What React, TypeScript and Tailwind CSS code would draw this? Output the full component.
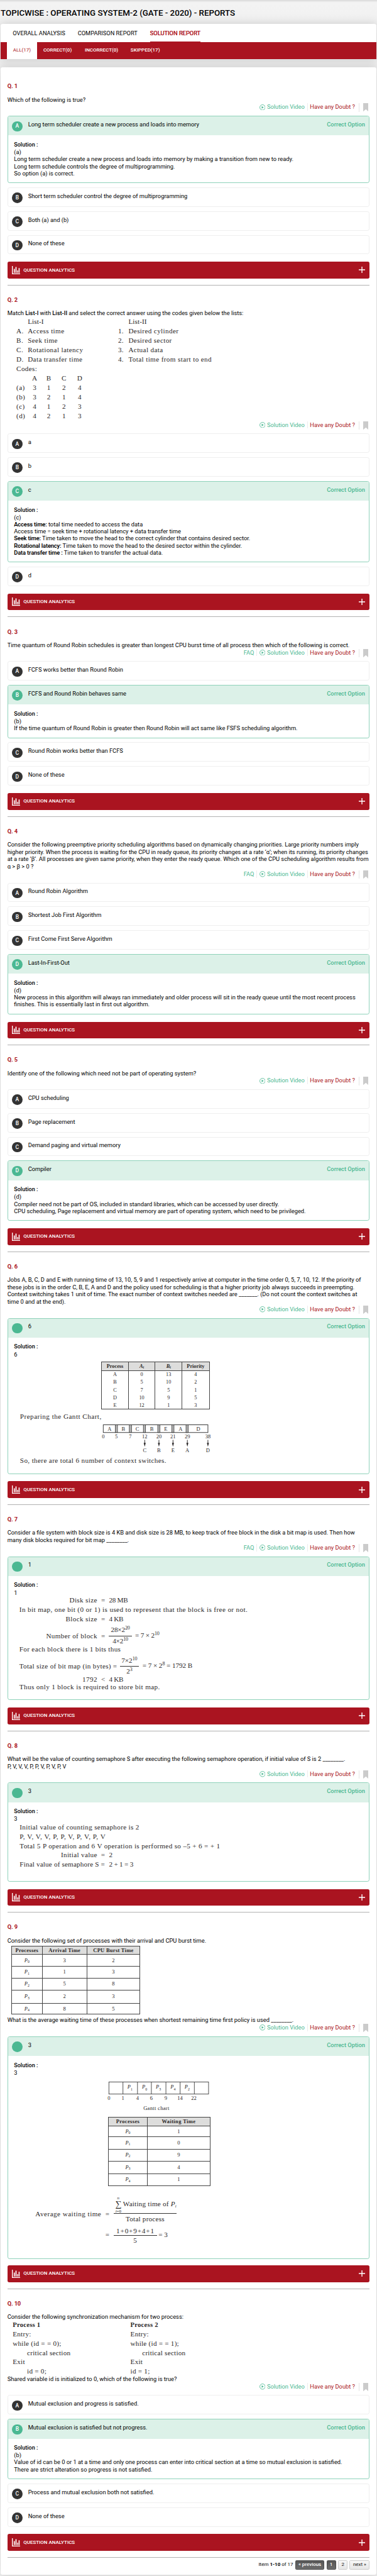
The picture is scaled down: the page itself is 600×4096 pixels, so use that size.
import type { ReactNode } from "react";

const sans = "font-[Roboto,'Liberation_Sans',sans-serif]";
const serif = "font-['Liberation_Serif',serif] text-[#2b2829]";

function ChartIcon() {
  return (
    <svg viewBox="0 0 25 25" className="h-[25px] w-[25px] fill-white">
      <path d="M0 0h2.6v22H25v3H0z" />
      <path d="M5.6 8.5h3V20h-3zM10.6 3h3.2v17h-3.2zM15.8 13h2.6v7h-2.6zM20 6h3v14h-3z" />
    </svg>
  );
}

function PlusIcon() {
  return (
    <svg viewBox="0 0 19 19" className="h-[19px] w-[19px] stroke-white stroke-[2.6]">
      <path d="M9.5 0v19M0 9.5h19" />
    </svg>
  );
}

function Actions({ faq }: { faq?: boolean }) {
  return (
    <div className="mb-[15px] flex h-[22px] items-center justify-end whitespace-nowrap pr-[4px] text-[17.5px] leading-[22px] text-[#4bb892]">
      {faq && <span className="mr-[7px]">FAQ</span>}
      {faq && <span className="mr-[7px] h-[22px] w-[1.5px] bg-[#ececec]" />}
      <svg viewBox="0 0 18 18" className="mr-[5px] mt-[1px] h-[18px] w-[18px]">
        <circle cx="9" cy="9" r="8" fill="none" stroke="#4bb892" strokeWidth="1.6" />
        <path d="M6.6 5.4 12.6 9l-6 3.6z" fill="#4bb892" />
      </svg>
      <span className="w-[113px]">Solution Video</span>
      <span className="mx-[7px] h-[22px] w-[1.5px] bg-[#ececec]" />
      <span className="w-[135px] text-[#aa1420]">Have any Doubt ?</span>
      <span className="ml-[11px] mr-[11px] mt-[3px] h-[25px] w-[1.5px] bg-[#e4e4e4]" />
      <svg viewBox="0 0 16 25" className="mt-[3px] h-[25px] w-[16px] fill-[#cbcbcb]">
        <path d="M0 0h16v25L8 18.5 0 25z" />
      </svg>
    </div>
  );
}

function Badge({ letter, correct }: { letter?: string; correct?: boolean }) {
  return (
    <span
      className={`mt-[14px] flex h-[31px] w-[31px] shrink-0 items-center justify-center rounded-full text-[16px] font-medium text-white ${
        correct ? "bg-[#4bb892]" : "bg-[#333333]"
      }`}
    >
      {letter}
    </span>
  );
}

function Option({ letter, children }: { letter: string; children: ReactNode }) {
  return (
    <div className="mb-[13px] flex h-[58px] rounded-[6px] border border-[#efefef] pl-[12px]">
      <Badge letter={letter} />
      <span className="ml-[17px] mt-[13px] text-[17.5px] leading-[22px]">{children}</span>
    </div>
  );
}

function Correct({
  letter,
  label,
  height,
  children,
}: {
  letter?: string;
  label: string;
  height: string;
  children: ReactNode;
}) {
  return (
    <div className={`mb-[13px] overflow-hidden rounded-[6px] border border-[#8fd2ba] bg-white ${height}`}>
      <div className="flex h-[57px] bg-[#dcf1e8] pl-[12px] pr-[12px] text-[17.5px] leading-[22px]">
        <Badge letter={letter} correct />
        <span className="ml-[17px] mt-[13px] flex-1">{label}</span>
        <span className="mt-[13px] font-medium text-[#4bb892]">Correct Option</span>
      </div>
      <div className="whitespace-nowrap pl-[18px] pt-[18px] text-[17.5px] leading-[21px]">
        <div className="text-[17px] font-medium">Solution :</div>
        {children}
      </div>
    </div>
  );
}

function Question({
  n,
  height,
  first,
  children,
}: {
  n: number;
  height: string;
  first?: boolean;
  children: ReactNode;
}) {
  return (
    <section className={`flex flex-col ${height}`}>
      {first ? <div className="h-[2px]" /> : <div className="h-[2px] shrink-0 bg-[#b2b2b2]" />}
      <h2 className="mt-[32px] mb-[18px] text-[17.5px] font-bold leading-[22px] tracking-[-0.3px] text-[#aa1420]">
        Q. {n}
      </h2>
      {children}
      <div className="mb-[19px] mt-auto flex h-[50px] shrink-0 items-center justify-between rounded-[5px] bg-[#aa1420] pl-[14px] pr-[14px] text-white">
        <span className="flex items-center gap-[9px] text-[15px] font-medium">
          <ChartIcon />
          QUESTION ANALYTICS
        </span>
        <PlusIcon />
      </div>
    </section>
  );
}

function Text({ children }: { children: ReactNode }) {
  return <div className="whitespace-nowrap text-[17.5px] leading-[22px]">{children}</div>;
}

function Term({ children }: { children: ReactNode }) {
  return <b className="font-semibold tracking-[-0.25px]">{children}</b>;
}

const lists = [
  ["A.", "Access time", "1.", "Desired cylinder"],
  ["B.", "Seek time", "2.", "Desired sector"],
  ["C.", "Rotational latency", "3.", "Actual data"],
  ["D.", "Data transfer time", "4.", "Total time from start to end"],
];
const codes = [
  ["", "A", "B", "C", "D"],
  ["(a)", "3", "1", "2", "4"],
  ["(b)", "3", "2", "1", "4"],
  ["(c)", "4", "1", "2", "3"],
  ["(d)", "4", "2", "1", "3"],
];

function MatchLists() {
  return (
    <div className={`h-[311px] whitespace-nowrap pl-[27px] text-[21px] leading-[28.1px] tracking-[0.7px] ${serif}`}>
      <div className="grid grid-cols-[34px_270px_31px_1fr]">
        <span />
        <span className="tracking-[0.2px]">List-I</span>
        <span />
        <span className="tracking-[0.2px]">List-II</span>
        {lists.flat().map((t, i) => (
          <span key={i}>{t}</span>
        ))}
      </div>
      <div>Codes:</div>
      <div className="grid grid-cols-[35px_40px_44px_47px_47px]">
        {codes.flat().map((t, i) => (
          <span key={i} className={i % 5 === 0 ? "" : "text-center"}>
            {t}
          </span>
        ))}
      </div>
    </div>
  );
}

const priorities = [
  ["A", "0", "13", "4"],
  ["B", "5", "10", "2"],
  ["C", "7", "5", "1"],
  ["D", "10", "9", "5"],
  ["E", "12", "1", "3"],
];

const slots6: [string, number][] = [
  ["A", 19],
  ["B", 60],
  ["C", 102],
  ["B", 145],
  ["E", 187],
  ["A", 231],
  ["D", 284],
];
const ticks6: [string, number, string][] = [
  ["0", 0, ""],
  ["5", 39, ""],
  ["7", 81, ""],
  ["12", 124, "C"],
  ["20", 166.5, "B"],
  ["21", 208.5, "E"],
  ["29", 251.5, "A"],
  ["38", 313, "D"],
];

function ContextSwitches() {
  return (
    <div className={`h-[328px] pt-[11px] ${serif}`}>
      <div className="ml-[261px] w-[324px] border border-[#444] text-[15.5px]">
        <div className="grid h-[27px] grid-cols-4 divide-x divide-[#444] border-b border-[#444] bg-[#dddddc] text-center font-bold leading-[25px]">
          <span>Process</span>
          <span className="italic">
            A<sub className="text-[11px] leading-none">t</sub>
          </span>
          <span className="italic">
            B<sub className="text-[11px] leading-none">t</sub>
          </span>
          <span>Priority</span>
        </div>
        <div className="grid h-[113px] grid-cols-4 divide-x divide-[#444] text-center leading-[23.1px]">
          {[0, 1, 2, 3].map((c) => (
            <div key={c} className="h-[113px]">
              {priorities.map((r) => (
                <div key={r[0]}>{r[c]}</div>
              ))}
            </div>
          ))}
        </div>
      </div>
      <div className="mt-[7px] pl-[18px] text-[21px] leading-[28px] tracking-[0.87px]">Preparing the Gantt Chart,</div>
      <svg
        viewBox="-10 0 340 90"
        className="ml-[256px] mt-[10px] h-[90px] w-[340px] fill-[#2b2829] text-[16px]"
        textAnchor="middle"
      >
        <rect x="0" y="1" width="313" height="23" fill="none" stroke="#333" strokeWidth="1.8" />
        {[36, 78, 120, 163, 205, 247.5].map((x) => (
          <rect key={x} x={x} y="1" width="6.5" height="23" fill="#b5b5b5" stroke="#333" strokeWidth="1.5" />
        ))}
        {slots6.map(([t, x], i) => (
          <text key={i} x={x} y="18.5">
            {t}
          </text>
        ))}
        {ticks6.map(([t, x, l]) => (
          <g key={t}>
            <text x={x} y="41.5">
              {t}
            </text>
            {l && <path d={`M${x - 0.9} 46h1.8v9h2.2l-3.1 11-3.1-11h2.2z`} />}
            {l && (
              <text x={x} y="82.5">
                {l}
              </text>
            )}
          </g>
        ))}
      </svg>
      <div className="mt-[4px] pl-[18px] text-[21px] leading-[28px] tracking-[0.67px]">
        So, there are total 6 number of context switches.
      </div>
    </div>
  );
}

function Sup({ children }: { children: ReactNode }) {
  return <span className="relative top-[-7px] text-[15px]">{children}</span>;
}

function Fraction({ top, bottom, width }: { top: ReactNode; bottom: ReactNode; width: string }) {
  return (
    <span className={`inline-flex flex-col text-center leading-[27px] ${width}`}>
      <span className="border-b border-[#333]">{top}</span>
      <span>{bottom}</span>
    </span>
  );
}

function Equation({
  left,
  op = "=",
  height,
  children,
}: {
  left: string;
  op?: string;
  height: string;
  children: ReactNode;
}) {
  return (
    <div className={`flex items-center ${height}`}>
      <span className="w-[249px] text-right">{left}</span>
      <span className="w-[35px] text-center tracking-normal">{op}</span>
      {children}
    </div>
  );
}

function BitMap() {
  return (
    <div className={`h-[291px] text-[21px] leading-[28px] tracking-[0.65px] ${serif}`}>
      <Equation left="Disk size" height="h-[26px]">
        <span className="tracking-[-0.5px]">28 MB</span>
      </Equation>
      <div className="h-[29px] pl-[16px] tracking-[0.72px]">
        In bit map, one bit (0 or 1) is used to represent that the block is free or not.
      </div>
      <Equation left="Block size" height="h-[27px]">
        <span className="tracking-[-0.5px]">4 KB</span>
      </Equation>
      <Equation left="Number of block" height="h-[74px]">
        <span className="flex items-center gap-[10px] tracking-[-0.3px]">
          <Fraction
            width="w-[68px]"
            top={
              <>
                28×2<Sup>20</Sup>
              </>
            }
            bottom={
              <>
                4×2<Sup>10</Sup>
              </>
            }
          />
          <span>
            = 7 × 2<Sup>10</Sup>
          </span>
        </span>
      </Equation>
      <div className="h-[25px] pl-[16px] leading-[4px] tracking-[0.6px]">For each block there is 1 bits thus</div>
      <div className="flex h-[58px] items-center pl-[16px] tracking-[0.54px]">
        <span className="w-[301px]">Total size of bit map (in bytes) =</span>
        <span className="flex items-center gap-[11px] tracking-[-0.1px]">
          <Fraction
            width="w-[56px]"
            top={
              <>
                7×2<Sup>10</Sup>
              </>
            }
            bottom={
              <>
                2<Sup>3</Sup>
              </>
            }
          />
          <span>
            = 7 × 2<Sup>8</Sup> = 1792 B
          </span>
        </span>
      </div>
      <Equation left="1792" op="<" height="h-[22px]">
        <span className="tracking-[-0.5px]">4 KB</span>
      </Equation>
      <div className="pl-[16px] leading-[21px] tracking-[0.7px]">Thus only 1 block is required to store bit map.</div>
    </div>
  );
}

function Semaphore() {
  return (
    <div className={`pl-[17px] text-[21px] leading-[28.1px] tracking-[0.62px] ${serif}`}>
      <div>Initial value of counting semaphore is 2</div>
      <div className="tracking-[1px]">P, V, V, V, P, P, V, P, V, P, V</div>
      <div>Total 5 P operation and 6 V operation is performed so –5 + 6 = + 1</div>
      <div className="flex">
        <span className="w-[232px] text-right">Initial value</span>
        <span className="w-[35px] text-center">=</span>2
      </div>
      <div className="flex tracking-[0.3px]">
        <span className="w-[267px]">Final value of semaphore S =</span>
        <span className="tracking-[-0.4px]">2 + 1 = 3</span>
      </div>
    </div>
  );
}

function P({ i }: { i: number }) {
  return (
    <span>
      <i>P</i>
      <sub className="text-[11px] leading-none">{i}</sub>
    </span>
  );
}

const bursts = [
  ["3", "2"],
  ["1", "3"],
  ["5", "8"],
  ["2", "3"],
  ["8", "5"],
];
const waits = ["1", "0", "9", "4", "1"];

function BurstTable() {
  return (
    <div className={`h-[216px] pl-[12px] pt-[4px] text-[16px] ${serif}`}>
      <div className="grid h-[206px] w-[385px] grid-cols-[91px_134px_1fr] grid-rows-[26px_34px_36px_36px_39px_1fr] border-l border-t border-[#444] text-center">
        {["Processes", "Arrival Time", "CPU Burst Time"].map((t) => (
          <span
            key={t}
            className="border-b border-r border-[#444] bg-[#dddddc] font-bold leading-[24px] tracking-[0.5px]"
          >
            {t}
          </span>
        ))}
        {bursts.flatMap((r, i) =>
          [<P key="p" i={i} />, r[0], r[1]].map((c, j) => (
            <span key={`${i}${j}`} className="flex items-center justify-center border-b border-r border-[#444]">
              {c}
            </span>
          )),
        )}
      </div>
    </div>
  );
}

const slots9 = [1, 0, 3, 4, 2];
const edges9 = [42, 85.5, 127, 170.5, 213, 255.5];
const ticks9: [string, number][] = [
  ["0", 0],
  ["1", 42],
  ["4", 85.5],
  ["6", 127],
  ["9", 170],
  ["14", 212.5],
  ["22", 254],
];

function WaitingTimes() {
  return (
    <div className={`h-[526px] pt-[17px] ${serif}`}>
      <svg
        viewBox="-10 0 320 90"
        className="ml-[274px] h-[90px] w-[320px] fill-[#2b2829] text-[16px]"
        textAnchor="middle"
      >
        <rect x="0" y="1" width="298" height="36" fill="none" stroke="#333" strokeWidth="1.6" />
        {edges9.map((x) => (
          <path key={x} d={`M${x} 1v36`} stroke="#333" strokeWidth="1.6" />
        ))}
        {slots9.map((s, i) => (
          <text key={s} x={edges9[i] + 21} y="21">
            <tspan fontStyle="italic">P</tspan>
            <tspan dy="5" fontSize="11">
              {s}
            </tspan>
          </text>
        ))}
        {ticks9.map(([t, x]) => (
          <text key={t} x={x} y="55">
            {t}
          </text>
        ))}
        <text x="142" y="84" letterSpacing="0.6">
          Gantt chart
        </text>
      </svg>
      <div className="ml-[281px] mt-[15px] grid h-[206px] w-[306px] grid-cols-[117px_1fr] grid-rows-[26px_33px_36px_36px_39px_1fr] border-l border-t border-[#444] text-center text-[16px]">
        {["Processes", "Waiting Time"].map((t) => (
          <span
            key={t}
            className="border-b border-r border-[#444] bg-[#dddddc] font-bold leading-[25px] tracking-[0.7px]"
          >
            {t}
          </span>
        ))}
        {waits.flatMap((w, i) =>
          [<P key="p" i={i} />, w].map((c, j) => (
            <span key={`${i}${j}`} className="flex items-center justify-center border-b border-r border-[#444]">
              {c}
            </span>
          )),
        )}
      </div>
      <div className="mt-[30px] flex text-[21px] leading-[26px]">
        <span className="ml-[64px] mt-[42px] w-[198px] tracking-[0.85px]">Average waiting time</span>
        <span className="mr-[2px] mt-[42px] w-[34px] text-center">=</span>
        <div className="w-[188px]">
          <div className="flex h-[54px] border-b border-[#333] pl-[3px]">
            <span className="flex w-[22px] flex-col items-center">
              <i className="text-[13px] leading-[10px]">n</i>
              <span className="text-[26px] leading-[30px]">∑</span>
              <span className="text-[13px] leading-[10px]">
                <i>i</i>=0
              </span>
            </span>
            <span className="ml-[3px] mt-[12px] whitespace-nowrap tracking-[0.4px]">
              Waiting time of <i>P</i>
              <sub className="text-[13px] italic leading-none">i</sub>
            </span>
          </div>
          <div className="pt-[3px] text-center tracking-[0.4px]">Total process</div>
        </div>
      </div>
      <div className="mt-[7px] flex items-center text-[21px] leading-[26px]">
        <span className="ml-[262px] mr-[2px] w-[34px] text-center">=</span>
        <Fraction width="w-[130px] tracking-[1.6px]" top="1+0+9+4+1" bottom="5" />
        <span className="ml-[4px]">= 3</span>
      </div>
    </div>
  );
}

function Mechanism() {
  return (
    <div
      className={`grid h-[164px] grid-cols-[352px_1fr] whitespace-nowrap pl-[16px] text-[21px] leading-[28.1px] tracking-[0.45px] ${serif}`}
    >
      <div>
        <div className="text-[20px] font-bold leading-[26px]">Process 1</div>
        <div>Entry:</div>
        <div>while (id = = 0);</div>
        <div className="pl-[43px]">critical section</div>
        <div>Exit</div>
        <div className="h-[25px] pl-[43px]">id = 0;</div>
      </div>
      <div>
        <div className="text-[20px] font-bold leading-[26px]">Process 2</div>
        <div>Entry:</div>
        <div>while (id = = 1);</div>
        <div className="pl-[35px]">critical section</div>
        <div>Exit</div>
        <div className="h-[25px]">id = 1;</div>
      </div>
    </div>
  );
}

function Header() {
  return (
    <>
      <div className="h-[72px] bg-linear-to-b from-[#d8d8d8] via-[#f3f3f3] via-10% to-[#f1f1f1] pl-[2px] pt-[23px]">
        <h1 className="whitespace-nowrap text-[25px] font-medium leading-[32px]">
          TOPICWISE : OPERATING SYSTEM-2 (GATE - 2020) - REPORTS
        </h1>
      </div>
      <header className="relative ml-[1px] mr-[1px] h-[104px] rounded-t-[6px] bg-white shadow-[0_0_30px_rgba(0,0,0,0.16)]">
        <nav className="flex h-[54px] gap-[37.5px] whitespace-nowrap pl-[37px] text-[17.5px] leading-[58px]">
          <span className="h-[54px]">OVERALL ANALYSIS</span>
          <span className="h-[54px]">COMPARISON REPORT</span>
          <span className="h-[54px] border-b-2 border-[#aa1420] leading-[58px] text-[#aa1420] [text-shadow:0_0_0.5px_#aa1420]">
            SOLUTION REPORT
          </span>
        </nav>
        <nav className="flex h-[50px] bg-[#aa1420] pl-[19px] text-[15px] font-medium leading-[50px] text-white">
          <span className="mr-[18.5px] w-[91px] bg-white text-center font-normal text-[#aa1420]">ALL(17)</span>
          <span className="w-[124px]">CORRECT(0)</span>
          <span className="w-[137px]">INCORRECT(0)</span>
          <span>SKIPPED(17)</span>
        </nav>
      </header>
    </>
  );
}

function Pagination() {
  const button = "flex h-[27px] items-center justify-center rounded-[3px] border text-[15px]";
  const dark = "border-[#4c4c4c] bg-linear-to-b from-[#575757] to-[#6b6b6b] font-medium text-white";
  const light = "border-[#cccccc] bg-linear-to-b from-[#f8f8f8] to-[#e6e6e6] text-[#111]";
  return (
    <div className="flex h-[52px] border-t-2 border-[#b2b2b2] pt-[8px] leading-[24px]">
      <div className="ml-auto flex">
        <span className="mr-[6px] text-[15px] leading-[26px]">
          Item <b>1-10</b> of 17
        </span>
        <span className={`mr-[6px] w-[88px] ${button} ${dark}`}>« previous</span>
        <span className={`mr-[7px] w-[28px] ${button} ${dark}`}>1</span>
        <span className={`mr-[6px] w-[28px] ${button} ${light}`}>2</span>
        <span className={`w-[60px] ${button} ${light}`}>next »</span>
      </div>
    </div>
  );
}

export default function App() {
  return (
    <div className={`h-[7695px] overflow-hidden bg-[#efefef] text-black [zoom:0.5323] ${sans}`}>
      <Header />
      <main className="relative ml-[2px] mr-[2px] mt-[26px] h-[7490px] rounded-[6px] bg-white px-[20px] pt-[11px] shadow-[0_0_30px_rgba(0,0,0,0.16)]">
        <Question n={1} height="h-[638px]" first>
          <Text>Which of the following is true?</Text>
          <Actions />
          <Correct letter="A" label="Long term scheduler create a new process and loads into memory" height="h-[201px]">
            (a)
            <br />
            Long term scheduler create a new process and loads into memory by making a transition from new to ready.
            <br />
            Long term schedule controls the degree of multiprogramming.
            <br />
            So option (a) is correct.
          </Correct>
          <Option letter="B">Short term scheduler control the degree of multiprogramming</Option>
          <Option letter="C">Both (a) and (b)</Option>
          <Option letter="D">None of these</Option>
        </Question>

        <Question n={2} height="h-[991px]">
          <Text>
            Match <b className="font-medium">List-I</b> with <b className="font-medium">List-II</b> and select the correct
            answer using the codes given below the lists:
          </Text>
          <MatchLists />
          <Actions />
          <Option letter="A">a</Option>
          <Option letter="B">b</Option>
          <Correct letter="C" label="c" height="h-[243px]">
            (c)
            <br />
            <Term>Access time:</Term> total time needed to access the data
            <br />
            Access time = seek time + rotational latency + data transfer time
            <br />
            <Term>Seek time:</Term> Time taken to move the head to the correct cylinder that contains desired sector.
            <br />
            <Term>Rotational latency:</Term> Time taken to move the head to the desired sector within the cylinder.
            <br />
            <Term>Data transfer time :</Term> Time taken to transfer the actual data.
          </Correct>
          <Option letter="D">d</Option>
        </Question>

        <Question n={3} height="h-[596px]">
          <Text>
            Time quantum of Round Robin schedules is greater than longest CPU burst time of all process then which of the
            following is correct.
          </Text>
          <Actions faq />
          <Option letter="A">FCFS works better than Round Robin</Option>
          <Correct letter="B" label="FCFS and Round Robin behaves same" height="h-[159px]">
            (b)
            <br />
            If the time quantum of Round Robin is greater then Round Robin will act same like FSFS scheduling algorithm.
          </Correct>
          <Option letter="C">Round Robin works better than FCFS</Option>
          <Option letter="D">None of these</Option>
        </Question>

        <Question n={4} height="h-[683px]">
          <Text>
            Consider the following preemptive priority scheduling algorithms based on dynamically changing priorities.
            Large priority numbers imply
            <br />
            higher priority. When the process is waiting for the CPU in ready queue, its priority changes at a rate ‘α’;
            when its running, its priority changes
            <br />
            at a rate ‘β’. All processes are given same priority, when they enter the ready queue. Which one of the CPU
            scheduling algorithm results from
            <br />α &gt; β &gt; 0 ?
          </Text>
          <Actions faq />
          <Option letter="A">Round Robin Algorithm</Option>
          <Option letter="B">Shortest Job First Algorithm</Option>
          <Option letter="C">First Come First Serve Algorithm</Option>
          <Correct letter="D" label="Last-In-First-Out" height="h-[180px]">
            (d)
            <br />
            New process in this algorithm will always ran immediately and older process will sit in the ready queue until
            the most recent process
            <br />
            finishes. This is essentially last in first out algorithm.
          </Correct>
        </Question>

        <Question n={5} height="h-[617px]">
          <Text>Identify one of the following which need not be part of operating system?</Text>
          <Actions />
          <Option letter="A">CPU scheduling</Option>
          <Option letter="B">Page replacement</Option>
          <Option letter="C">Demand paging and virtual memory</Option>
          <Correct letter="D" label="Compiler" height="h-[180px]">
            (d)
            <br />
            Compiler need not be part of OS, included in standard libraries, which can be accessed by user directly.
            <br />
            CPU scheduling, Page replacement and virtual memory are part of operating system, which need to be
            privileged.
          </Correct>
        </Question>

        <Question n={6} height="h-[756px]">
          <Text>
            Jobs A, B, C, D and E with running time of 13, 10, 5, 9 and 1 respectively arrive at computer in the time
            order 0, 5, 7, 10, 12. If the priority of
            <br />
            these jobs is in the order C, B, E, A and D and the policy used for scheduling is that a higher priority job
            always succeeds in preempting.
            <br />
            Context switching takes 1 unit of time. The exact number of context switches needed are _______. (Do not count
            the context switches at
            <br />
            time 0 and at the end).
          </Text>
          <Actions />
          <Correct label="6" height="h-[467px]">
            6
            <ContextSwitches />
          </Correct>
        </Question>

        <Question n={7} height="h-[676px]">
          <Text>
            Consider a file system with block size is 4 KB and disk size is 28 MB, to keep track of free block in the disk
            a bit map is used. Then how
            <br />
            many disk blocks required for bit map ________.
          </Text>
          <Actions faq />
          <Correct label="1" height="h-[430px]">
            1
            <BitMap />
          </Correct>
        </Question>

        <Question n={8} height="h-[542px]">
          <Text>
            What will be the value of counting semaphore S after executing the following semaphore operation, if initial
            value of S is 2 ________.
            <br />
            P, V, V, V, P, P, V, P, V, P, V
          </Text>
          <Actions />
          <Correct label="3" height="h-[297px]">
            3
            <Semaphore />
          </Correct>
        </Question>

        <Question n={9} height="h-[1124px]">
          <Text>Consider the following set of processes with their arrival and CPU burst time.</Text>
          <BurstTable />
          <Text>
            What is the average waiting time of these processes when shortest remaining time first policy is used ________.
          </Text>
          <Actions />
          <Correct label="3" height="h-[665px]">
            3
            <WaitingTimes />
          </Correct>
        </Question>

        <Question n={10} height="h-[803px]">
          <Text>Consider the following synchronization mechanism for two process:</Text>
          <Mechanism />
          <Text>Shared variable id is initialized to 0, which of the following is true?</Text>
          <Actions />
          <Option letter="A">Mutual exclusion and progress is satisfied.</Option>
          <Correct letter="B" label="Mutual exclusion is satisfied but not progress." height="h-[180px]">
            (b)
            <br />
            Value of id can be 0 or 1 at a time and only one process can enter into critical section at a time so mutual
            exclusion is satisfied.
            <br />
            There are strict alteration so progress is not satisfied.
          </Correct>
          <Option letter="C">Process and mutual exclusion both not satisfied.</Option>
          <Option letter="D">None of these</Option>
        </Question>

        <Pagination />
      </main>
    </div>
  );
}
